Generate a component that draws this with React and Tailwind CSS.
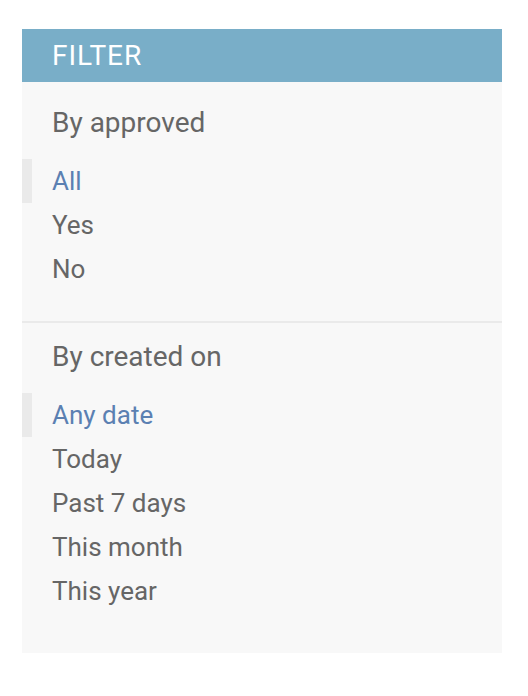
export default function App() {
  const Row = ({ children, selected }) => (
    <li
      className={
        "h-[44px] pr-[30px] py-[10px] text-[26px] leading-[24px] " +
        (selected
          ? "border-l-[10px] border-[#eaeaea] pl-[20px] text-[#5b80b2]"
          : "pl-[30px] text-[#666666]")
      }
    >
      {children}
    </li>
  );
  return (
    <div className="bg-white min-h-[696px] pt-[29px] pl-[22px]" style={{ fontFamily: "Roboto, 'Liberation Sans', sans-serif" }}>
      <div className="w-[480px] h-[624px] bg-[#f8f8f8]">
        <h2 className="h-[53px] bg-[#79aec8] px-[30px] py-[10px] text-[28px] leading-[33px] tracking-[1px] text-white uppercase">
          Filter
        </h2>
        <h3 className="mt-[24px] mb-[20px] px-[30px] text-[28px] leading-[33px] text-[#666666]">By approved</h3>
        <ul className="pb-[30px] border-b-[2px] border-[#eaeaea]">
          <Row selected>All</Row>
          <Row>Yes</Row>
          <Row>No</Row>
        </ul>
        <h3 className="mt-[17px] mb-[20px] px-[30px] text-[28px] leading-[33px] text-[#666666]">By created on</h3>
        <ul>
          <Row selected>Any date</Row>
          <Row>Today</Row>
          <Row>Past 7 days</Row>
          <Row>This month</Row>
          <Row>This year</Row>
        </ul>
      </div>
    </div>
  );
}
